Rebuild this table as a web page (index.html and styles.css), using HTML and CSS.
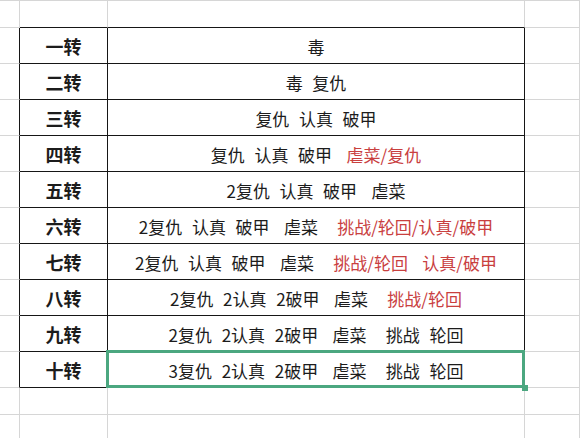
FILE: index.html
```html
<!DOCTYPE html>
<html>
<head>
<meta charset="utf-8">
<link rel="stylesheet" href="styles.css">
</head>
<body>
<div class="sheet">
  <div class="c g"></div><div class="c tt"></div><div class="c tt"></div><div class="c g"></div>

  <div class="c rh"></div><div class="c h">一转</div><div class="c d">毒</div><div class="c g"></div>
  <div class="c rh"></div><div class="c h">二转</div><div class="c d">毒  复仇</div><div class="c g"></div>
  <div class="c rh"></div><div class="c h">三转</div><div class="c d">复仇  认真  破甲</div><div class="c g"></div>
  <div class="c rh"></div><div class="c h">四转</div><div class="c d">复仇  认真  破甲   <span class="r">虐菜/复仇</span></div><div class="c g"></div>
  <div class="c rh"></div><div class="c h">五转</div><div class="c d">2复仇  认真  破甲   虐菜</div><div class="c g"></div>
  <div class="c rh"></div><div class="c h">六转</div><div class="c d">2复仇  认真  破甲   虐菜    <span class="r">挑战/轮回/认真/破甲</span></div><div class="c g"></div>
  <div class="c rh"></div><div class="c h">七转</div><div class="c d">2复仇  认真  破甲   虐菜    <span class="r">挑战/轮回   认真/破甲</span></div><div class="c g"></div>
  <div class="c rh"></div><div class="c h">八转</div><div class="c d">2复仇  2认真  2破甲   虐菜    <span class="r">挑战/轮回</span></div><div class="c g"></div>
  <div class="c rh"></div><div class="c h">九转</div><div class="c d">2复仇  2认真  2破甲   虐菜    挑战  轮回</div><div class="c g"></div>
  <div class="c rh"></div><div class="c h">十转</div><div class="c d sel">3复仇  2认真  2破甲   虐菜    挑战  轮回</div><div class="c g"></div>

  <div class="c g"></div><div class="c g"></div><div class="c g"></div><div class="c g"></div>
  <div class="c e"></div><div class="c e"></div><div class="c e"></div><div class="c e"></div>
</div>
</body>
</html>
```
FILE: styles.css
```css
html, body {
  margin: 0;
  padding: 0;
  background: #ffffff;
}
body {
  width: 580px;
  height: 438px;
  overflow: hidden;
  font-family: "Noto Sans CJK SC", "Microsoft YaHei", sans-serif;
  color: #1c1c1c;
}
.sheet {
  display: grid;
  grid-template-columns: 20px 88px 417px 55px;
  grid-template-rows: 27px repeat(10, 36px) 27px 23px;
  border-top: 1px solid #d6d6d6;
}
.c {
  box-sizing: border-box;
  border-right: 1px solid #d6d6d6;
  border-bottom: 1px solid #d6d6d6;
  display: flex;
  align-items: center;
  justify-content: center;
}
.c.e {
  border-bottom: none;
}
.tt {
  border-bottom-color: #161616;
}
.rh {
  border-right-color: #161616;
}
.h, .d {
  border-right-color: #161616;
  border-bottom-color: #161616;
}
.h {
  font-weight: 700;
  font-size: 18px;
  padding-top: 1px;
}
.d {
  font-size: 17px;
  white-space: pre;
  word-spacing: 1px;
  padding-top: 1px;
}
.r {
  color: #c9403f;
}
.sel {
  position: relative;
}
.sel::after {
  content: "";
  position: absolute;
  top: -2px;
  left: -2px;
  right: -1px;
  bottom: -1px;
  border: 3px solid #4ba780;
}
.sel::before {
  content: "";
  position: absolute;
  right: -4px;
  bottom: -4px;
  width: 6px;
  height: 6px;
  background: #4ba780;
  z-index: 1;
}
```
